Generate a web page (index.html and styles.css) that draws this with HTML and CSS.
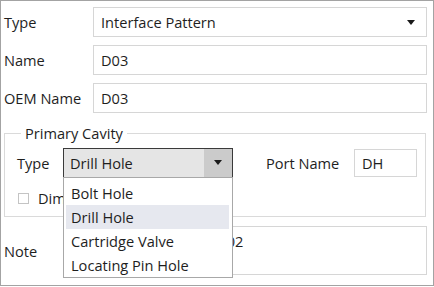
FILE: index.html
```html
<!DOCTYPE html>
<html lang="en">
<head>
    <meta charset="UTF-8">
    <title>Interface Pattern</title>
    <link rel="stylesheet" href="styles.css">
</head>
<body>
    <div class="frame">
        <div class="row">
            <label class="label">Type</label>
            <div class="field select">
                <span>Interface Pattern</span>
                <span class="arrow"></span>
            </div>
        </div>
        <div class="row">
            <label class="label">Name</label>
            <div class="field">D03</div>
        </div>
        <div class="row">
            <label class="label">OEM Name</label>
            <div class="field">D03</div>
        </div>

        <fieldset class="group">
            <legend>Primary Cavity</legend>
            <div class="cavity-row">
                <label class="inner-label">Type</label>
                <div class="combo-wrap">
                    <div class="combo">
                        <span class="combo-text">Drill Hole</span>
                        <span class="combo-btn"><span class="arrow"></span></span>
                    </div>
                    <ul class="popup">
                        <li>Bolt Hole</li>
                        <li class="hover">Drill Hole</li>
                        <li>Cartridge Valve</li>
                        <li>Locating Pin Hole</li>
                    </ul>
                </div>
                <label class="port-label">Port Name</label>
                <div class="field port">DH</div>
            </div>
            <div class="check-row">
                <span class="checkbox"></span>
                <span class="check-text">Dimension Only</span>
            </div>
        </fieldset>

        <div class="row note-row">
            <label class="label">Note</label>
            <div class="field note">Per drawing D03-002</div>
        </div>
    </div>
</body>
</html>
```

FILE: styles.css
```css
body {
    margin: 0;
    font-family: 'Open Sans', 'Noto Sans', sans-serif;
    font-size: 14.6px;
    color: #1e1e1e;
    background-color: #ffffff;
}

.frame {
    box-sizing: border-box;
    width: 434px;
    height: 286px;
    border: 1px solid #a3a3a3;
    padding: 6px 6px 0 3px;
}

.row {
    display: flex;
    align-items: center;
    height: 30px;
    margin-bottom: 8px;
}

.label {
    width: 89px;
}

.field {
    box-sizing: border-box;
    flex: 1;
    height: 30px;
    border: 1px solid #d6d6d6;
    padding: 0 7px;
    display: flex;
    align-items: center;
    background-color: #fff;
}

.select {
    justify-content: space-between;
    padding-right: 11px;
}

.arrow {
    width: 0;
    height: 0;
    border-left: 4px solid transparent;
    border-right: 4px solid transparent;
    border-top: 5px solid #1a1a1a;
}

.group {
    box-sizing: border-box;
    margin: 10px 1px 9px 0;
    height: 94px;
    border: 1px solid #dadada;
    padding: 5px 0 0 12px;
}

.group legend {
    padding: 0 4px;
    margin-left: 4px;
}

.cavity-row {
    display: flex;
    align-items: center;
    height: 29px;
}

.inner-label {
    width: 46px;
}

.combo-wrap {
    position: relative;
    width: 170px;
}

.combo {
    box-sizing: border-box;
    height: 30px;
    display: flex;
    border: 1px solid #3a3a3a;
    background-color: #e5e5e5;
}

.combo-text {
    flex: 1;
    display: flex;
    align-items: center;
    padding-left: 6px;
}

.combo-btn {
    width: 28px;
    display: flex;
    align-items: center;
    justify-content: center;
    background-color: #cbcbcb;
}

.popup {
    position: absolute;
    top: 29px;
    left: 0;
    right: 0;
    margin: 0;
    padding: 3px 0 0;
    list-style: none;
    background-color: #fff;
    border: 1px solid #a8a8a8;
    z-index: 2;
}

.popup li {
    height: 24px;
    line-height: 24px;
    margin: 0 3px 0 2px;
    padding-left: 5px;
}

.popup .hover {
    background-color: #e6e8ef;
}

.port-label {
    margin-left: 33px;
    width: 88px;
}

.port {
    flex: none;
    width: 63px;
    height: 28px;
}

.check-row {
    display: flex;
    align-items: center;
    margin-top: 11px;
    gap: 9px;
}

.checkbox {
    box-sizing: border-box;
    width: 11px;
    height: 11px;
    border: 1px solid #c4c4c4;
    margin-left: 1px;
}

.check-text {
    white-space: nowrap;
    width: 25px;
    overflow: hidden;
}

.note-row {
    height: 49px;
}

.note {
    height: 49px;
    align-items: flex-start;
    padding-top: 4px;
}
```
